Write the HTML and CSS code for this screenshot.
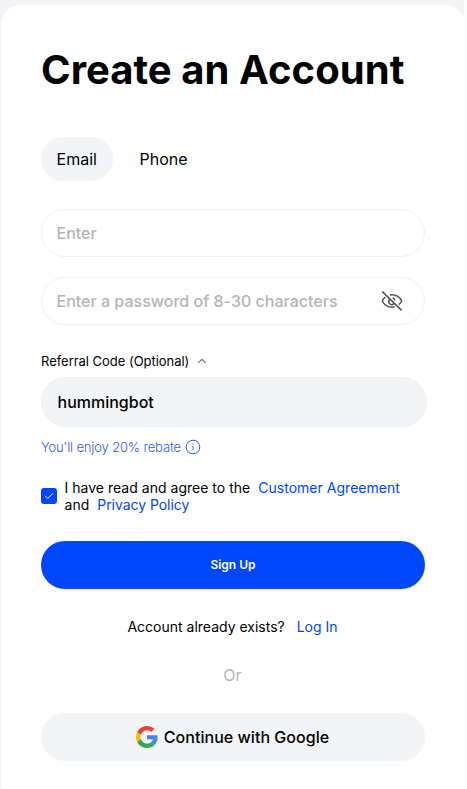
FILE: index.html
```html
<!DOCTYPE html>
<html lang="en">
<head>
<meta charset="utf-8">
<title>Create an Account</title>
<link rel="stylesheet" href="styles.css">
</head>
<body>
<div class="page">
<main class="card">
  <h1 class="title">Create an Account</h1>
  <div class="tabs">
    <button class="tab active" type="button">Email</button>
    <button class="tab" type="button">Phone</button>
  </div>
  <div class="field"><span class="placeholder">Enter</span></div>
  <div class="field">
    <span class="placeholder">Enter a password of 8-30 characters</span>
    <svg class="eye" width="24" height="24" viewBox="0 0 24 24" fill="none" stroke="#505050" stroke-width="1.5">
      <path d="M10 6C10.600 5.860 11.300 5.800 12 5.800c4.200 0 7.800 2.400 9.800 6.200-.7 1.400-1.700 2.600-2.900 3.600M5.300 8.200C4 9.200 2.900 10.500 2.200 12c2 3.800 5.600 6.200 9.800 6.200 1 0 1.900-.1 2.800-.4"/>
      <path d="M9.500 10.500a3 3 0 0 0 4.500 4M12.600 9.100a3 3 0 0 1 2.300 2.300M2.300 2.600l19.300 18.800"/>
    </svg>
  </div>
  <div class="referral">
    <span>Referral Code (Optional)</span>
    <svg width="10" height="6" viewBox="0 0 10 6" fill="none" stroke="#777" stroke-width="1.2"><path d="M1.300 4.900L5 1.300l3.700 3.600"/></svg>
  </div>
  <div class="code">hummingbot</div>
  <div class="rebate">
    <span>You'll enjoy 20% rebate</span>
    <svg width="16" height="16" viewBox="0 0 16 16" fill="none" stroke="#2e5cf6"><circle cx="8" cy="8" r="6.800"/><path d="M8 4.500v1.200M7.200 7.400H8v4" stroke-width=".9"/></svg>
  </div>
  <div class="agreement">
    <span class="checkbox"><svg width="10" height="8" viewBox="0 0 10 8" fill="none" stroke="#fff"><path d="M1 3.800l2.700 2.700L9 1.200"/></svg></span>
    <p class="terms">I have read and agree to the <a class="link spaced">Customer Agreement</a><br>and <a class="link spaced privacy">Privacy Policy</a></p>
  </div>
  <button class="signup" type="button">Sign Up</button>
  <p class="login">Account already exists?<a class="link">Log In</a></p>
  <p class="or">Or</p>
  <button class="google" type="button">
    <svg width="22" height="22" viewBox="0 0 48 48">
      <path fill="#ea4335" d="M24 9.500c3.540 0 6.710 1.220 9.210 3.600l6.850-6.850C35.900 2.380 30.470 0 24 0 14.620 0 6.510 5.380 2.560 13.220l7.980 6.190C12.430 13.720 17.740 9.500 24 9.500z"/>
      <path fill="#4285f4" d="M46.980 24.550c0-1.570-.15-3.090-.38-4.550H24v9.020h12.940c-.58 2.960-2.260 5.480-4.780 7.180l7.730 6c4.510-4.180 7.090-10.360 7.090-17.650z"/>
      <path fill="#fbbc05" d="M10.530 28.590A14.500 14.500 0 0 1 9.770 24c0-1.600.27-3.140.76-4.590l-7.980-6.190A23.900 23.900 0 0 0 0 24c0 3.880.92 7.540 2.560 10.780z"/>
      <path fill="#34a853" d="M24 48c6.480 0 11.930-2.130 15.890-5.810l-7.730-6c-2.150 1.450-4.920 2.300-8.160 2.300-6.260 0-11.570-4.220-13.470-9.910l-7.980 6.190C6.510 42.620 14.620 48 24 48z"/>
    </svg>
    <span>Continue with Google</span>
  </button>
</main>
</div>
</body>
</html>
```
FILE: styles.css
```css
* { box-sizing: border-box; }
body {
  margin: 0;
  background: #fff;
  color: #000;
  font-family: Inter, "Liberation Sans", sans-serif;
}
.page {
  width: 464px;
  height: 789px;
  padding: 5px 0 0 1px;
  overflow: hidden;
  background: #f3f4f6;
}
.card {
  width: 464px;
  height: 800px;
  padding: 40px 41px 0 40px;
  border-radius: 20px;
  background: #fff;
}
button {
  border: 0;
  padding: 0;
  font: inherit;
  color: inherit;
}
p { margin: 0; }
svg { display: block; flex: none; }
.title {
  margin: 0;
  font-size: 40px;
  line-height: 50px;
  font-weight: 700;
  letter-spacing: 0.05px;
  white-space: nowrap;
}
.tabs { display: flex; gap: 11px; margin-top: 42px; }
.tab {
  height: 44px;
  padding: 0 16px 0 15.500px;
  border-radius: 22px;
  background: transparent;
  font-size: 16px;
}
.active { width: 72px; background: #f3f4f6; }
.field {
  display: flex;
  align-items: center;
  justify-content: space-between;
  width: 384px;
  height: 48px;
  margin-top: 28px;
  padding: 0 20px 0 14.500px;
  border: 1px solid #f0f0f1;
  border-radius: 24px;
}
.field + .field { margin-top: 20px; }
.placeholder {
  color: #b4b4b4;
  font-size: 16px;
  font-weight: 500;
  letter-spacing: 0.01px;
  white-space: nowrap;
}
.referral {
  display: flex;
  align-items: center;
  gap: 8px;
  height: 16px;
  margin-top: 28px;
  font-size: 13px;
  letter-spacing: -0.03px;
}
.code {
  width: 386px;
  height: 50px;
  margin-top: 8px;
  padding-left: 15.500px;
  border: 1px solid #f0f0f1;
  border-radius: 25px;
  background: #f3f4f6;
  font-size: 16px;
  font-weight: 500;
  line-height: 48px;
}
.rebate {
  display: flex;
  align-items: center;
  gap: 4px;
  height: 16px;
  margin-top: 12px;
  color: #2e5cf6;
  font-size: 13px;
  font-weight: 300;
  letter-spacing: -0.15px;
}
.agreement {
  display: flex;
  align-items: center;
  gap: 7.500px;
  margin-top: 24px;
}
.checkbox {
  display: flex;
  align-items: center;
  justify-content: center;
  width: 16px;
  height: 16px;
  border-radius: 3px;
  background: #0046ff;
}
.terms {
  font-size: 14px;
  line-height: 17px;
  letter-spacing: 0.02px;
  white-space: nowrap;
}
.link { color: #0046ff; }
.spaced { margin-left: 4px; }
.privacy { letter-spacing: -0.04px; }
.signup {
  display: block;
  width: 384px;
  height: 48px;
  margin-top: 28px;
  padding-bottom: 1px;
  border-radius: 24px;
  background: #0046ff;
  color: #fff;
  font-size: 12px;
  font-weight: 600;
}
.login {
  display: flex;
  justify-content: center;
  gap: 12px;
  margin-top: 29px;
  font-size: 14px;
  line-height: 17px;
}
.or {
  margin-top: 30px;
  color: #b4b4b4;
  font-size: 16px;
  line-height: 20px;
  text-align: center;
}
.google {
  display: flex;
  align-items: center;
  justify-content: center;
  gap: 6px;
  width: 384px;
  height: 48px;
  margin-top: 28px;
  padding-right: 1px;
  border-radius: 24px;
  background: #f3f4f6;
  font-size: 16px;
  font-weight: 500;
  letter-spacing: 0.03px;
}
```
